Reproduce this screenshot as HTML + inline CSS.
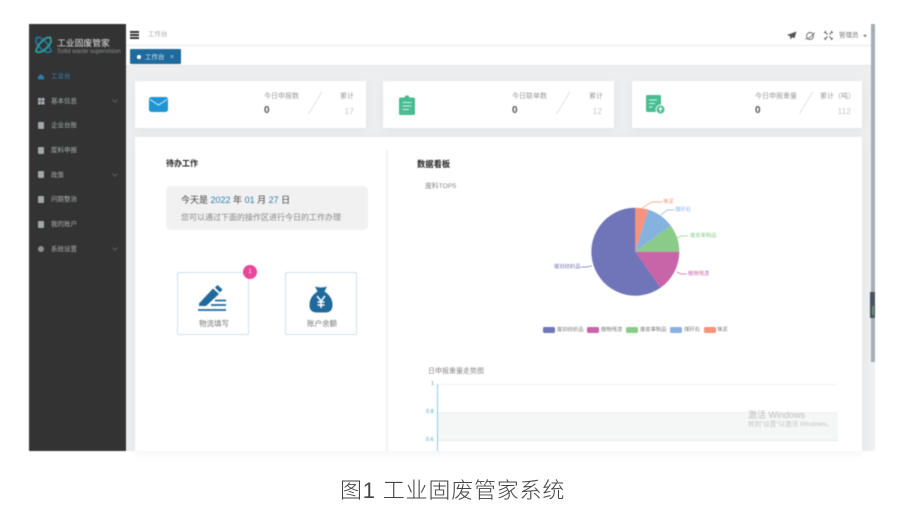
<!DOCTYPE html>
<html lang="zh">
<head>
<meta charset="utf-8">
<style>
html,body{margin:0;padding:0;background:#fff;width:904px;height:513px;overflow:hidden}
body{font-family:"Liberation Sans","Noto Sans CJK SC",sans-serif;position:relative}
.a{position:absolute;white-space:nowrap}
#app{position:absolute;left:0;top:0;width:904px;height:513px;filter:blur(.5px)}
.menu{left:51px;font-size:6.5px;color:#a9adb0;line-height:10px}
.ic{left:38px;width:6px;height:7px;background:#a4a8aa;border-radius:1px}
.card{background:#fff;box-shadow:0 2px 10px rgba(0,0,0,.05)}
.lab{font-size:7px;color:#9a9a9a;line-height:10px}
.num{font-size:10px;font-weight:bold;color:#555;line-height:12px}
.tot{font-size:8.5px;color:#c8c8c8;line-height:10px}
.chev{width:3px;height:3px;border-right:1px solid #5c5c5c;border-bottom:1px solid #5c5c5c;transform:rotate(45deg);left:113px}
.leg{font-size:5.3px;color:#777;line-height:8px}
.sw{width:12px;height:6px;border-radius:1.5px;top:327px}
</style>
</head>
<body>
<div id="app">
<!-- sidebar -->
<div class="a" style="left:29px;top:24px;width:97px;height:427px;background:#333333"></div>
<svg class="a" style="left:33px;top:35px" width="21" height="21" viewBox="0 0 22 22" fill="none">
<path d="M4 2.5C9 2 17 9 19 17C14 21 6 13 3 7Z" stroke="#1f6f9c" stroke-width="2"/>
<path d="M18 2.5C13 2 5 9 3 17C8 21 16 13 19 7Z" stroke="#2f9d93" stroke-width="2"/>
</svg>
<div class="a" style="left:57px;top:37px;font-size:8.800px;line-height:12px;color:#e4e4e4">工业固废管家</div>
<div class="a" style="left:57px;top:47px;font-size:6.100px;line-height:9px;color:#8b8f90">Solid waste supervision</div>

<svg class="a" style="left:38px;top:74px" width="6" height="5.500" viewBox="0 0 8 7"><path d="M4 0L8 3.5V7H0V3.5Z" fill="#2d7fb0"/></svg>
<div class="a menu" style="top:71.500px;color:#2f83b6">工业台</div>
<div class="a" style="left:38px;top:98px;width:2.500px;height:2.500px;background:#a8acae;box-shadow:3.500px 0 #a8acae,0 3.500px #a8acae,3.500px 3.500px #a8acae"></div>
<div class="a menu" style="top:96.500px">基本信息</div><div class="a chev" style="top:98px"></div>
<div class="a ic" style="top:122px"></div><div class="a menu" style="top:121px">企业台账</div>
<div class="a ic" style="top:147px"></div><div class="a menu" style="top:145.500px">废料申报</div>
<div class="a ic" style="top:171px"></div><div class="a menu" style="top:170.500px">政策</div><div class="a chev" style="top:172px"></div>
<div class="a ic" style="top:196px"></div><div class="a menu" style="top:195px">问题整治</div>
<div class="a ic" style="top:221px"></div><div class="a menu" style="top:219.500px">我的账户</div>
<div class="a ic" style="top:246px;height:6px;border-radius:50%;background:#8d9092"></div><div class="a menu" style="top:244.500px">系统设置</div><div class="a chev" style="top:246px"></div>

<!-- header -->
<div class="a" style="left:126px;top:24px;width:745px;height:21px;background:#fff;border-bottom:1px solid #e6e8ea"></div>
<div class="a" style="left:130px;top:31px;width:9px;height:1.500px;background:#333;box-shadow:0 3px #333,0 6px #333"></div>
<div class="a" style="left:148px;top:30px;font-size:6.500px;line-height:9px;color:#a5a8ad">工作台</div>
<svg class="a" style="left:787px;top:31px" width="10" height="9" viewBox="0 0 10 9"><path d="M9.500.5L0 4L3 5.300L3.500 8.500L5.300 6.300L7.500 7.300Z" fill="#555"/></svg>
<svg class="a" style="left:805px;top:31px" width="10" height="10" viewBox="0 0 10 10" fill="none" stroke="#666" stroke-width=".9"><circle cx="5" cy="5" r="3.500"/><path d="M.5 8C3 8 8 5 9.500 1.500"/></svg>
<svg class="a" style="left:824px;top:31px" width="9" height="9" viewBox="0 0 9 9" fill="none" stroke="#555" stroke-width="1.100"><path d="M0 1.500H1.500V0M7.500 0V1.500H9M0 7.500H1.500V9M9 7.500H7.500V9M2 2L3.500 3.500M7 2L5.500 3.500M2 7L3.500 5.500M7 7L5.500 5.500"/></svg>
<div class="a" style="left:839px;top:31px;font-size:6.500px;line-height:9px;color:#777">管理员</div>
<div class="a" style="left:863px;top:34.500px;border:2px solid transparent;border-top:2.500px solid #666;border-bottom:0"></div>

<!-- tabs -->
<div class="a" style="left:126px;top:46px;width:745px;height:19px;background:#fff;border-bottom:1px solid #e6e8ea"></div>
<div class="a" style="left:130px;top:49px;width:51px;height:15px;background:#1f6a9c;border-radius:1px"></div>
<div class="a" style="left:137px;top:55px;width:3.500px;height:3.500px;background:#fff;border-radius:50%"></div>
<div class="a" style="left:145px;top:52.500px;font-size:6.500px;line-height:9px;color:#d8e6ef">工作台</div>
<div class="a" style="left:170px;top:53px;font-size:7px;line-height:9px;color:#bcd3e2">×</div>

<!-- content bg -->
<div class="a" style="left:126px;top:66px;width:745px;height:385px;background:#eceef0"></div>

<!-- stat cards -->
<div class="a card" style="left:135px;top:81px;width:231px;height:47px"></div>
<div class="a card" style="left:383px;top:81px;width:231px;height:47px"></div>
<div class="a card" style="left:632px;top:81px;width:230px;height:47px"></div>

<svg class="a" style="left:149px;top:97px" width="19" height="15" viewBox="0 0 19 15"><rect width="19" height="15" rx="2.500" fill="#2095d2"/><path d="M1 2.500L9.500 8L18 2.500" fill="none" stroke="#d7ecf7" stroke-width="1"/></svg>
<div class="a lab" style="left:264px;top:92px">今日申报数</div>
<div class="a num" style="left:264px;top:105px">0</div>
<svg class="a" style="left:308px;top:91px" width="15" height="24"><path d="M.5 23L14 .5" stroke="#dcdcdc" stroke-width=".8"/></svg>
<div class="a lab" style="left:340px;top:92px">累计</div>
<div class="a tot" style="right:550px;top:106px">17</div>

<svg class="a" style="left:399px;top:95px" width="16" height="20" viewBox="0 0 16 20"><path d="M1.500 2.500H5.500L6.500 .5H9.500L10.500 2.500H14.500Q16 2.500 16 4V18.500Q16 20 14.500 20H1.500Q0 20 0 18.500V4Q0 2.500 1.500 2.500Z" fill="#47bd90"/><path d="M3.500 7.500H12.500M3.500 11H12.500M3.500 14.500H10" stroke="#d3f0e4" stroke-width="1"/></svg>
<div class="a lab" style="left:512px;top:92px">今日联单数</div>
<div class="a num" style="left:512px;top:105px">0</div>
<svg class="a" style="left:556px;top:91px" width="15" height="24"><path d="M.5 23L14 .5" stroke="#dcdcdc" stroke-width=".8"/></svg>
<div class="a lab" style="left:589px;top:92px">累计</div>
<div class="a tot" style="right:302px;top:106px">12</div>

<svg class="a" style="left:646px;top:95px" width="20" height="20" viewBox="0 0 20 20"><rect width="15" height="17" rx="1.500" fill="#47bd90"/><path d="M3 5H11M3 8.500H9M3 12H6.500" stroke="#dff5ec" stroke-width="1.100"/><circle cx="14.500" cy="14.500" r="4.500" fill="#47bd90" stroke="#fff" stroke-width="1"/><path d="M14.500 17V13M12.800 14.500L14.500 12.500L16.200 14.500" stroke="#fff" stroke-width="1" fill="none"/></svg>
<div class="a lab" style="left:755px;top:92px">今日申报重量</div>
<div class="a num" style="left:755px;top:105px">0</div>
<svg class="a" style="left:799px;top:91px" width="15" height="24"><path d="M.5 23L14 .5" stroke="#dcdcdc" stroke-width=".8"/></svg>
<div class="a lab" style="left:820px;top:92px">累计（吨）</div>
<div class="a tot" style="right:53px;top:106px">112</div>

<!-- main -->
<div class="a card" style="left:135px;top:137px;width:727px;height:314px"></div>
<div class="a" style="left:386px;top:150px;width:2px;height:301px;background:#f1f2f3"></div>

<div class="a" style="left:166px;top:158px;font-size:8px;line-height:12px;font-weight:bold;color:#222">待办工作</div>
<div class="a" style="left:166px;top:186px;width:202px;height:44px;background:#f1f1f1;border-radius:5px"></div>
<div class="a" style="left:181px;top:194px;font-size:9px;line-height:12px;color:#444">今天是 <span style="color:#2f7fb0">2022</span> 年 <span style="color:#2f7fb0">01</span> 月 <span style="color:#2f7fb0">27</span> 日</div>
<div class="a" style="left:181px;top:212px;font-size:8px;line-height:11px;color:#888">您可以通过下面的操作区进行今日的工作办理</div>

<div class="a" style="left:177px;top:272px;width:70px;height:61px;border:1.500px solid #cfe2ed;border-radius:2px;background:#fff"></div>
<svg class="a" style="left:198px;top:285px" width="30" height="29" viewBox="0 0 30 29"><path d="M1 18.500L15 3.500L21 9L8 21H1Z" fill="#1f6a9c"/><path d="M17 2.500L19.500 0L24.500 4.500L22 7.500Z" fill="#1f6a9c"/><path d="M13 20H28M17 15.500H28M0 25H28" stroke="#1f6a9c" stroke-width="1.700"/></svg>
<div class="a" style="left:199px;top:319px;font-size:7.500px;line-height:10px;color:#777">物流填写</div>
<div class="a" style="left:243px;top:265px;width:14px;height:14px;background:#e8469b;border-radius:50%;color:#fbdcec;font-size:6.500px;line-height:14px;text-align:center">1</div>

<div class="a" style="left:285px;top:272px;width:70px;height:61px;border:1.500px solid #cfe2ed;border-radius:2px;background:#fff"></div>
<svg class="a" style="left:309px;top:286px" width="24" height="27" viewBox="0 0 24 27"><path d="M6 0.500Q12 2.500 18 .5L15.500 5.500Q24 11 23.500 20Q23 26.500 16 26.500H8Q1 26.500 .5 20Q0 11 8.500 5.500Z" fill="#1f6a9c"/><path d="M8 10L12 15L16 10M12 15V22M8.500 16H15.500M8.500 19H15.500" stroke="#fff" stroke-width="1.500" fill="none"/></svg>
<div class="a" style="left:307px;top:319px;font-size:7.500px;line-height:10px;color:#777">账户余额</div>

<div class="a" style="left:417px;top:158px;font-size:8.300px;line-height:12px;font-weight:bold;color:#222">数据看板</div>
<div class="a" style="left:425px;top:181.500px;font-size:6.800px;line-height:10px;color:#888">废料TOP5</div>

<!-- pie -->
<svg class="a" style="left:530px;top:190px" width="210" height="130" viewBox="530 190 210 130" fill="none">
<path d="M635.300 251.700V207.700A44 44 0 0 1 648.200 209.600Z" fill="#f9927a"/>
<path d="M635.300 251.700L648.200 209.600A44 44 0 0 1 670.700 225.600Z" fill="#86b2e0"/>
<path d="M635.300 251.700L670.700 225.600A44 44 0 0 1 679.300 251.700Z" fill="#8bcb8a"/>
<path d="M635.300 251.700H679.300A44 44 0 0 1 660.500 287.800Z" fill="#c864a8"/>
<path d="M635.300 251.700L660.500 287.800A44 44 0 1 1 635.300 207.700Z" fill="#7074b8"/>
<path d="M642 208L652 202H662" stroke="#f9927a" stroke-width=".7"/>
<path d="M661 215L667 210H674" stroke="#86b2e0" stroke-width=".7"/>
<path d="M677 238L681 236H688" stroke="#8bcb8a" stroke-width=".7"/>
<path d="M677 272L681 274H687" stroke="#c864a8" stroke-width=".7"/>
<path d="M592 266L586 267H581" stroke="#7074b8" stroke-width=".7"/>
</svg>
<div class="a leg" style="left:663px;top:198px;color:#f9927a">堆泥</div>
<div class="a leg" style="left:675px;top:206px;color:#86b2e0">煤矸石</div>
<div class="a leg" style="left:690px;top:232px;color:#8bcb8a">度皮革制品</div>
<div class="a leg" style="left:688px;top:270px;color:#c864a8">植物残渣</div>
<div class="a leg" style="left:554px;top:263px;color:#7074b8">废旧纺织品</div>

<div class="a sw" style="left:543px;background:#7074b8"></div><div class="a leg" style="left:557px;top:326px">废旧纺织品</div>
<div class="a sw" style="left:587px;background:#c864a8"></div><div class="a leg" style="left:601px;top:326px">植物残渣</div>
<div class="a sw" style="left:626px;background:#8bcb8a"></div><div class="a leg" style="left:640px;top:326px">度皮革制品</div>
<div class="a sw" style="left:670px;background:#86b2e0"></div><div class="a leg" style="left:684px;top:326px">煤矸石</div>
<div class="a sw" style="left:704px;background:#f9927a"></div><div class="a leg" style="left:717px;top:326px">堆泥</div>

<!-- line chart -->
<div class="a" style="left:428px;top:367px;font-size:7px;line-height:10px;color:#888">日申报重量走势图</div>
<div class="a" style="left:437px;top:384px;width:1px;height:67px;background:#8fcbe6"></div>
<div class="a" style="left:438px;top:384px;width:400px;height:1px;background:#f0f1f1"></div>
<div class="a" style="left:438px;top:412px;width:400px;height:29px;background:#f5f6f6;border-top:1px solid #eff0f0;border-bottom:1px solid #eaecec;box-sizing:border-box"></div>
<div class="a" style="left:431px;top:381px;font-size:5.500px;line-height:7px;color:#45a5d0">1</div>
<div class="a" style="left:426px;top:409px;font-size:5.500px;line-height:7px;color:#45a5d0">0.8</div>
<div class="a" style="left:426px;top:437px;font-size:5.500px;line-height:7px;color:#45a5d0">0.6</div>
<div class="a" style="left:748px;top:409px;font-size:9px;line-height:12px;color:#bcbdbd">激活 Windows</div>
<div class="a" style="left:748px;top:420px;font-size:6.500px;line-height:9px;color:#c4c5c5">转到"设置"以激活 Windows。</div>

<!-- scrollbar -->
<div class="a" style="left:871px;top:24px;width:4px;height:338px;background:#a3adb3"></div>
<div class="a" style="left:871px;top:362px;width:4px;height:89px;background:#eef0f1"></div>
<div class="a" style="left:870px;top:292px;width:5px;height:26px;background:#4a5160"></div>
<div class="a" style="left:872px;top:306px;width:2px;height:9px;background:#5c8f78"></div>
</div>
<!-- caption -->
<div class="a" style="left:340px;top:476px;font-family:'Liberation Sans','Noto Sans CJK SC',sans-serif;font-weight:300;font-size:22px;line-height:30px;color:#444;letter-spacing:.8px">图1 工业固废管家系统</div>
</body>
</html>
